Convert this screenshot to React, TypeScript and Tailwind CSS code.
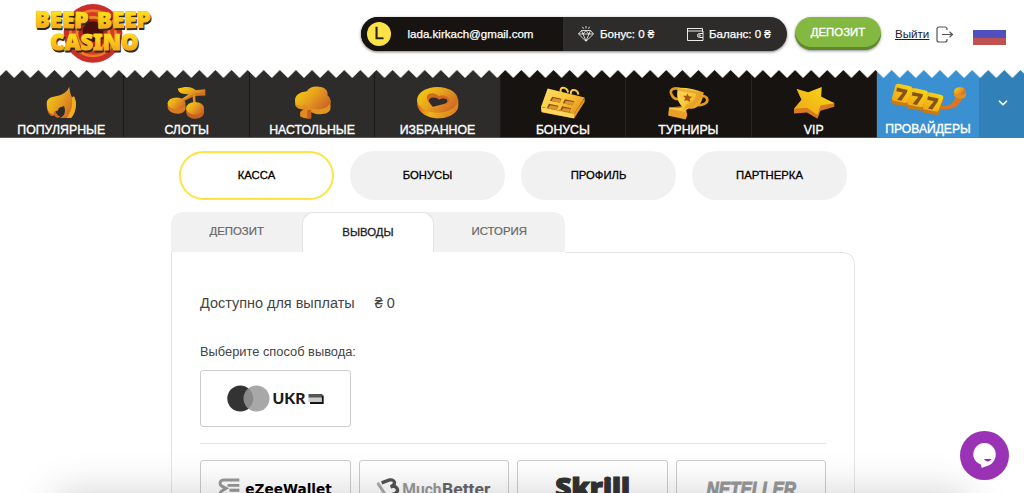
import type { ReactNode } from 'react';
import { ChevronDown } from 'lucide-react';

interface NavItem {
  label: string;
  icon: ReactNode;
  dark?: boolean;
}

function Gradients() {
  return (
    <svg className="absolute h-0 w-0" aria-hidden="true">
      <defs>
        <linearGradient id="gold" x1="0" y1="0" x2="1" y2="0.6">
          <stop offset="0" stopColor="#f5d40f" />
          <stop offset="0.5" stopColor="#e9a51c" />
          <stop offset="1" stopColor="#cf6a25" />
        </linearGradient>
        <linearGradient id="bright" x1="0" y1="1" x2="1" y2="0">
          <stop offset="0" stopColor="#f0a21c" />
          <stop offset="1" stopColor="#f8dc10" />
        </linearGradient>
        <linearGradient id="goldFlip" x1="0" y1="0" x2="1" y2="0.3">
          <stop offset="0" stopColor="#d9522a" />
          <stop offset="0.5" stopColor="#efb41a" />
          <stop offset="1" stopColor="#de8420" />
        </linearGradient>
        <linearGradient id="pale" x1="0" y1="0" x2="1" y2="0.6">
          <stop offset="0" stopColor="#ffdf68" />
          <stop offset="0.55" stopColor="#fbca3d" />
          <stop offset="1" stopColor="#e99a1d" />
        </linearGradient>
        <linearGradient id="logoFill" x1="0" y1="0" x2="0" y2="1">
          <stop offset="0.2" stopColor="#ffe81c" />
          <stop offset="0.9" stopColor="#f5a01b" />
        </linearGradient>
      </defs>
    </svg>
  );
}

function Logo() {
  const words = (
    <>
      <text x="104" y="84" fontSize="67" textLength="161" lengthAdjust="spacingAndGlyphs" transform="rotate(1 180 80)">BEEP</text>
      <text x="291" y="84" fontSize="67" textLength="162" lengthAdjust="spacingAndGlyphs" transform="rotate(-1 370 80)">BEEP</text>
      <text x="151" y="150" fontSize="66" textLength="264" lengthAdjust="spacingAndGlyphs">CASINO</text>
    </>
  );
  return (
    <svg viewBox="99 10 360 183" className="h-[61px] w-[120px]">
      <circle cx="279" cy="101" r="88" fill="#c9302c" />
      <circle cx="279" cy="101" r="72" fill="#ee7a22" />
      <circle cx="279" cy="101" r="64" fill="#d63a28" />
      <circle cx="279" cy="101" r="52" fill="#f08a20" />
      <circle cx="279" cy="101" r="44" fill="#b32822" />
      <circle cx="279" cy="96" r="31" fill="#4c0d0d" />
      <g fontFamily="'Noto Sans', sans-serif" fontWeight="900" strokeLinejoin="round">
        <g fill="#33270b" stroke="#33270b" strokeWidth="3" transform="translate(3 6)">{words}</g>
        <g fill="url(#logoFill)" stroke="#f4b41b" strokeWidth="3">{words}</g>
        <g fill="url(#logoFill)">{words}</g>
      </g>
    </svg>
  );
}

function FlameIcon() {
  return (
    <svg viewBox="138 257 93 99" className="h-[33px] w-[31px]">
      <path d="M140 312c0 20 6 31 14 35l20-2c-9-8-9-17-2-24l15-6 5-10Z" fill="#cf5f22" />
      <path d="M141 316c-4-20 8-25 29-29 20-4 31-13 38-28 1 14 4 24 8 32l6-4c9 20 7 49-8 65l-33 1c14-7 17-20 11-36-8 5-15 2-17 10l-1 4c-14 0-14 8-12 12-11-2-20-10-21-27Z" fill="url(#gold)" />
      <path d="M178 324c5-1 9-3 11-6 3 8 2 15-3 20-6-1-10-6-8-14Z" fill="#2d2c2a" />
      <path d="M168 338c4 6 8 10 15 12l-12 2c-8-3-9-9-3-14Z" fill="#cf6a25" />
      <path d="m222 289 5 13c3 16-2 37-13 50l-14 1c12-16 19-35 16-61Z" fill="#f0b01a" />
    </svg>
  );
}

function CherryIcon() {
  return (
    <svg viewBox="499 256 118 99" className="h-[33px] w-[39px]">
      <path d="m531 263 48 5 36-2v18l-32 2-31 14-6-4 26-13-32-6Z" fill="#cd7421" />
      <path d="M532 264c24-9 46-6 54 5l28-3v9l-33 3-30 19-7-3 22-14c-16 1-32-1-34-16Z" fill="url(#gold)" />
      <path d="M576 275h8l2 36h-8Z" fill="#db8b20" />
      <path d="M501 309v12c4 22 46 26 54 5v-15Z" fill="#d77a20" />
      <ellipse cx="528" cy="308" rx="27" ry="18" fill="url(#gold)" />
      <path d="M557 323v14c5 22 48 24 54 1v-15Z" fill="#c96221" />
      <ellipse cx="584" cy="323" rx="27" ry="19" fill="url(#gold)" />
    </svg>
  );
}

function ClubIcon() {
  return (
    <svg viewBox="161 61 110 99" className="h-[33px] w-[37px]">
      <path d="M164 101v17c3 9 14 14 26 13l34 13c20 5 45 0 46-16V104Z" fill="#e0961c" />
      <path d="m190 118 22 12v28c-12 2-24 0-33-6v-13l10-8Z" fill="#e2891f" />
      <path d="M164 109c-3-17 9-29 35-32 6-11 19-16 36-14 20 2 28 12 26 26 11 8 12 23 2 32-11 10-34 13-53 7l-12-6c2-4-3-7-7-5-12 6-25 2-27-8Z" fill="url(#gold)" />
      <path d="m212 132 0 26-12 1v-25Z" fill="#c45f22" />
    </svg>
  );
}

function HeartIcon() {
  return (
    <svg viewBox="529 61 130 100" className="h-[33px] w-[43px]">
      <path d="M532 101v17c5 25 34 43 68 41 34-2 58-20 57-39v-17Z" fill="url(#goldFlip)" />
      <ellipse cx="594" cy="103" rx="62" ry="39" fill="url(#gold)" />
      <path d="M579 125c-9-12-18-20-17-31 1-14 24-15 36-3 14-4 32 1 32 13 0 8-6 11-14 12Z" fill="#d06a22" />
      <path d="M580 124c-6-8-11-13-12-20 3-11 22-10 31-1 9-6 22-5 25 2 0 5-3 8-9 10Z" fill="#2d2c2a" />
    </svg>
  );
}

function GiftIcon() {
  return (
    <svg viewBox="151 60 136 102" className="h-[34px] w-[45px]">
      <path d="m154 124 101 18 31-46v11l-32 51-98-19Z" fill="#e49a1c" />
      <path d="m174 67 112 27-31 49-101-20Z" fill="url(#pale)" />
      <path d="M214 78c-6-18 18-17 22 1M245 84c-5-18 20-16 22 2" fill="none" stroke="#f7cb48" strokeWidth="6" />
      <path d="m188 92 28 6-5 12-30-6Zm38 8 29 6-7 12-28-6Zm-48 13 29 6-5 12-30-6Zm40 8 27 6-6 12-27-6Z" fill="#8d4a11" />
      <path d="m191 96 25 5-5 9-25-5Zm38 8 25 4-6 10-24-5Zm-47 14 24 4-5 9-25-5Zm40 8 22 3-6 9-22-4Z" fill="#d9962a" />
      <path d="m154 124 100 20v13l-98-19Z" fill="#ffd55c" />
    </svg>
  );
}

function TrophyIcon() {
  return (
    <svg viewBox="537 60 123 101" className="h-[34px] w-[41px]">
      <path d="M571 68c-23-6-29 7-23 18 4 10 14 14 24 13M634 90c24-3 26 16 12 23-9 5-18 4-24 2" fill="none" stroke="#e09a1e" strokeWidth="8" />
      <path d="m540 124 50-5 5 28-5 13-52-11Z" fill="#d37b1a" />
      <path d="M567 65c27-1 51 4 77 14-4 34-18 52-44 48l-11 5 4 13-4 13-50-12 2-22 27 2 13-3c-15-13-20-34-14-58Z" fill="url(#pale)" />
      <path d="m566 65 77 14-4 13-28 33-22 1-9 9 12-21c20-4 30-16 29-31l-56-9Z" fill="#dc9420" opacity=".55" />
      <path d="m540 126 50 12 4 8-5 12-50-10Z" fill="#e9a024" />
      <path d="m596 82 3 8 11 2-8 6 1 10-8-6-10 2 4-8-7-7h10Z" fill="#a9550f" />
    </svg>
  );
}

function StarIcon() {
  return (
    <svg viewBox="131 61 125 100" className="h-[33px] w-[42px]">
      <path d="m141 70 15 33-23 27v14l39-3 32 19 9-24 42-12v-12Z" fill="#d77a20" />
      <path d="m141 70 35 10 41-16-2 29 40 20-42 7-9 29-32-22-39 3 23-27Z" fill="url(#bright)" />
    </svg>
  );
}

function SlotsIcon() {
  return (
    <svg viewBox="419 50 231 97" className="h-[32px] w-[77px]">
      <path d="M572 119c26 4 38-7 47-31l19 4c-9 26-22 42-66 37Z" fill="#d8771f" />
      <path d="M612 75v13c7 14 34 12 36 1V74Z" fill="#e2901f" />
      <ellipse cx="630" cy="75" rx="18" ry="12" fill="url(#gold)" />
      {[0, 47, 94].map((dx, i) => (
        <g key={dx} transform={`translate(${dx} ${i * 13})`}>
          <path d="m424 96-1 12c0 5 3 6 8 7l32 6c6 1 9-2 11-7l12-42-7-8Z" fill="#c97a12" />
          <path d="M440 53c2-1 5 0 8 0l31 7c6 2 7 5 6 10l-13 34c-2 6-6 7-12 6l-31-6c-5-1-6-4-5-9l10-37c1-3 3-5 6-5Z" fill="url(#bright)" />
          <path d="m439 64 32 7-2 8-17 25-13-3 18-22-20-4Z" fill="#84531a" />
        </g>
      ))}
    </svg>
  );
}

const navItems: NavItem[] = [
  { label: 'ПОПУЛЯРНЫЕ', icon: <FlameIcon /> },
  { label: 'СЛОТЫ', icon: <CherryIcon /> },
  { label: 'НАСТОЛЬНЫЕ', icon: <ClubIcon /> },
  { label: 'ИЗБРАННОЕ', icon: <HeartIcon /> },
  { label: 'БОНУСЫ', icon: <GiftIcon />, dark: true },
  { label: 'ТУРНИРЫ', icon: <TrophyIcon />, dark: true },
  { label: 'VIP', icon: <StarIcon />, dark: true },
];

function Header() {
  return (
    <header className="flex h-[70px] text-[11.55px] text-white">
      <div className="ml-[33px] mt-[3px] w-[328px]">
        <Logo />
      </div>
      <div className="mt-[17px] flex h-[33.5px] w-[426px] items-center overflow-hidden rounded-full bg-[#2d2c2a] shadow-[0_1px_3px_rgba(0,0,0,0.55)] [-webkit-text-stroke:0.25px_white]">
        <div className="flex h-full w-[202px] items-center bg-[#171310]">
          <span className="ml-1.5 flex h-6 w-6 items-center justify-center rounded-full bg-[#fde347] text-[17px] text-[#222] [-webkit-text-stroke:0.4px_#222]">L</span>
          <span className="ml-[16.5px] pt-px">lada.kirkach@gmail.com</span>
        </div>
        <svg viewBox="0 0 16 16" className="ml-[15px] h-4 w-4 shrink-0" fill="none" stroke="white" strokeWidth="0.8">
          <path d="M3.5 4.5h9L15.5 8 8 15.3.5 8ZM.5 8h15M5 8l3 7 3-7M3.5 4.5 5 8l3-3.5L11 8l1.5-3.5M8 0v2.5M4.5.8l1 2M11.5.8l-1 2" />
        </svg>
        <span className="ml-1.5 w-[87px] whitespace-nowrap pt-px">Бонус: 0 ₴</span>
        <svg viewBox="0 0 17 14" className="h-3.5 w-[17px] shrink-0" fill="none" stroke="white" strokeWidth="0.9">
          <path d="M.5 1.5h15v3M.5 1v12.5h15.5V4H.5M16 6.5h-3.5a2 2 0 0 0 0 4H16" />
          <circle cx="12.8" cy="8.5" r=".8" />
        </svg>
        <span className="ml-[5px] whitespace-nowrap pt-px">Баланс: 0 ₴</span>
      </div>
      <button className="ml-2 mt-[17px] flex h-[33px] w-[86px] items-center justify-center rounded-full bg-[#83b940] pb-0.5 text-[11.4px] shadow-[inset_0_-3px_0_#5f8a2c,0_1px_3px_rgba(0,0,0,0.45)] [-webkit-text-stroke:0.35px_white]">
        ДЕПОЗИТ
      </button>
      <a href="#" className="ml-[14px] mt-[25px] flex h-[18px] items-center text-[11.6px] text-[#222]">
        <span className="w-[35px] underline underline-offset-1">Выйти</span>
        <svg viewBox="0 0 18 17" className="ml-[6px] h-[17px] w-[18px]" fill="none" stroke="#555" strokeWidth="1.2">
          <path d="M11 4V3a2 2 0 0 0-2-2H3a2 2 0 0 0-2 2v11a2 2 0 0 0 2 2h6a2 2 0 0 0 2-2v-1M6 8.5h10.5M13.5 5.8l3 2.7-3 2.7" />
        </svg>
      </a>
      <div className="ml-[19px] mt-[30px] h-[15px] w-[33px]">
        <div className="h-1/2 bg-[#4f4fbd]" />
        <div className="h-1/2 bg-[#bd5251]" />
      </div>
    </header>
  );
}

function Nav() {
  return (
    <nav className="relative flex h-[67.5px] overflow-hidden text-white [-webkit-text-stroke:0.35px_white]">
      <div className="-ml-px flex w-[878px]">
        {navItems.map(({ label, icon, dark }) => (
          <a
            key={label}
            href="#"
            className={`flex flex-1 basis-0 flex-col items-center border-r pt-[15.5px] text-[12.3px] leading-[14px] ${
              dark ? 'border-[#292622] bg-[#171310]' : 'border-[#1b1917] bg-[#2d2c2a]'
            }`}
          >
            <span className="flex h-[37px] items-start">{icon}</span>
            {label}
          </a>
        ))}
      </div>
      <a href="#" className="flex w-[102px] flex-col items-center bg-[#3a90d1] pt-[12.5px] text-[12.1px] leading-[14px]">
        <span className="flex h-[39px] items-start">
          <SlotsIcon />
        </span>
        ПРОВАЙДЕРЫ
      </a>
      <button className="flex flex-1 justify-center bg-[#3180b8] pt-[26px]">
        <ChevronDown size={14} strokeWidth={3} className="ml-0.5" />
      </button>
      <svg className="absolute left-0 top-0 h-2 w-full">
        <defs>
          <pattern id="teeth" x="-1.9" width="16.1" height="8" patternUnits="userSpaceOnUse">
            <path d="M0 0H16.1V8L8.05 0 0 8Z" fill="white" />
          </pattern>
        </defs>
        <rect width="100%" height="8" fill="url(#teeth)" />
      </svg>
      <div className="absolute bottom-0 left-0 h-px w-full bg-[#777]/60" />
    </nav>
  );
}

function UkrCard() {
  return (
    <svg viewBox="0 0 98 27" className="h-[27px] w-[98px]">
      <circle cx="13.3" cy="13.5" r="13" fill="#333" />
      <circle cx="29.5" cy="13.5" r="13" fill="#999" fillOpacity=".85" />
      <text x="45.5" y="19" fontFamily="Lato, sans-serif" fontWeight="900" fontSize="15" textLength="33" lengthAdjust="spacingAndGlyphs" fill="#1b1b1b">UKR</text>
      <path d="M81.500 12h12.500v5H81.500Z" fill="#ccc" />
      <path d="M81.500 9h14v3.500h-14Z" fill="#555" />
      <path d="M95.700 10.500V18H83" fill="none" stroke="#151515" strokeWidth="2" />
    </svg>
  );
}

function EZeeWallet() {
  return (
    <svg viewBox="0 0 151 34" className="h-[34px] w-full overflow-visible">
      <path d="M39 19H23.500c-5 0-5 5-2 6.500l4 2-4 2.500c-3 2-3 5 2 5H39M27 24.500h12M29 29.500h10" fill="none" stroke="#999" strokeWidth="3" />
      <text x="45" y="33" fontFamily="'DejaVu Sans', sans-serif" fontWeight="700" fontSize="14.500" textLength="88" lengthAdjust="spacingAndGlyphs">eZeeWallet</text>
    </svg>
  );
}

function MuchBetter() {
  return (
    <svg viewBox="0 0 151 34" className="h-[34px] w-full overflow-visible">
      <path d="m18 22 9 14" stroke="#aaa" strokeWidth="3" />
      <path d="m22 22 8-3c6-1 7 5 1 7 7-2 10 5 4 7l-8 3" fill="none" stroke="#555" strokeWidth="3.400" />
      <g fontFamily="Roboto, sans-serif" fontWeight="700" fontSize="16">
        <text x="43" y="34" fill="#999" textLength="40" lengthAdjust="spacingAndGlyphs">Much</text>
        <text x="83.500" y="34" fill="#666" textLength="49" lengthAdjust="spacingAndGlyphs">Better</text>
      </g>
    </svg>
  );
}

function Skrill() {
  return (
    <svg viewBox="0 0 151 34" className="h-[34px] w-full overflow-visible">
      <text x="38" y="36" fontFamily="'Open Sans', sans-serif" fontWeight="800" fontSize="27" textLength="76" lengthAdjust="spacingAndGlyphs" fill="#333" stroke="#333" strokeWidth="1.200">Skrill</text>
    </svg>
  );
}

function Neteller() {
  return (
    <svg viewBox="0 0 151 34" className="h-[34px] w-full overflow-visible">
      <text x="30" y="35.500" fontFamily="'Liberation Sans', sans-serif" fontWeight="700" fontStyle="italic" fontSize="20" textLength="91" lengthAdjust="spacingAndGlyphs" fill="#999" stroke="#999" strokeWidth="1">NETELLER</text>
    </svg>
  );
}

const sections = ['КАССА', 'БОНУСЫ', 'ПРОФИЛЬ', 'ПАРТНЕРКА'];
const tabs = ['ДЕПОЗИТ', 'ВЫВОДЫ', 'ИСТОРИЯ'];
const methods = [
  { name: 'eZeeWallet', logo: <EZeeWallet /> },
  { name: 'MuchBetter', logo: <MuchBetter /> },
  { name: 'Skrill', logo: <Skrill /> },
  { name: 'Neteller', logo: <Neteller /> },
];

function Cashier() {
  return (
    <main className="ml-[171px] w-[684px]">
      <div className="ml-2 flex gap-4 pt-[13px]">
        {sections.map((name, i) => (
          <button
            key={name}
            className={`h-[49px] w-[155px] rounded-full text-[11.3px] text-black [-webkit-text-stroke:0.3px_black] ${
              i === 0 ? 'border-2 border-[#fde347] bg-white' : 'bg-[#f1f1f1]'
            }`}
          >
            {name}
          </button>
        ))}
      </div>

      <div className="mt-3 flex h-[40.5px] w-[394px] overflow-hidden rounded-t-xl bg-[#f1f1f1] text-[11.4px]">
        {tabs.map((name, i) => (
          <button
            key={name}
            className={`h-[41px] w-[131.3px] ${
              i === 1
                ? 'rounded-t-xl border border-b-0 border-[#e3e3e3] bg-white text-[#222] [-webkit-text-stroke:0.3px_#222]'
                : 'text-[#666] [-webkit-text-stroke:0.2px_#666]'
            }`}
          >
            {name}
          </button>
        ))}
      </div>
      <div className="flex">
        <div className="h-3 w-[394px] border-l border-[#e6e6e6] bg-white" />
        <div className="h-3 flex-1 rounded-tr-xl border-r border-t border-[#e6e6e6]" />
      </div>

      <div className="h-[240px] border-x border-[#e6e6e6] px-7 pt-[30px] text-[#444]">
        <div className="flex h-5 items-center gap-5 text-[14.45px]">
          <span>Доступно для выплаты</span>
          <span>₴ 0</span>
        </div>
        <p className="mt-[25px] flex h-[22px] items-center pt-1 text-[12.85px]">Выберите способ вывода:</p>
        <div className="mt-[9px] flex h-[57px] w-[151px] items-center justify-center rounded-[3px] border border-[#ccc]">
          <UkrCard />
        </div>
        <hr className="mt-4 border-[#e4e4e4]" />
        <div className="mt-4 grid grid-cols-4 gap-2">
          {methods.map(({ name, logo }) => (
            <div key={name} className="h-[57px] rounded-[3px] border border-[#ccc]">
              {logo}
            </div>
          ))}
        </div>
      </div>
    </main>
  );
}

export default function App() {
  return (
    <div className="relative h-[493px] w-full overflow-hidden bg-white font-['Liberation_Sans',Arial,sans-serif]">
      <Gradients />
      <Header />
      <Nav />
      <Cashier />
      <div className="absolute inset-x-14 top-full h-24 shadow-[0_0_40px_rgba(0,0,0,0.18)]" />
      <button className="absolute bottom-[13px] right-[15px] h-[49px] w-[49px] rounded-full bg-[#9932b5]">
        <svg viewBox="0 0 49 49" className="h-full w-full">
          <path d="M24.500 12a11.300 11.300 0 0 1 11.300 11.500c0 4-2 7-4 9-3 2.500-6 2.500-10 4.500l-1-3.500c-4.500-1.800-7.500-5.500-7.500-10A11.300 11.300 0 0 1 24.500 12Z" fill="white" />
          <path d="M24 28h7.500c-1.500 3.200-6 3.200-7.500 0Z" fill="#9932b5" />
        </svg>
      </button>
    </div>
  );
}
